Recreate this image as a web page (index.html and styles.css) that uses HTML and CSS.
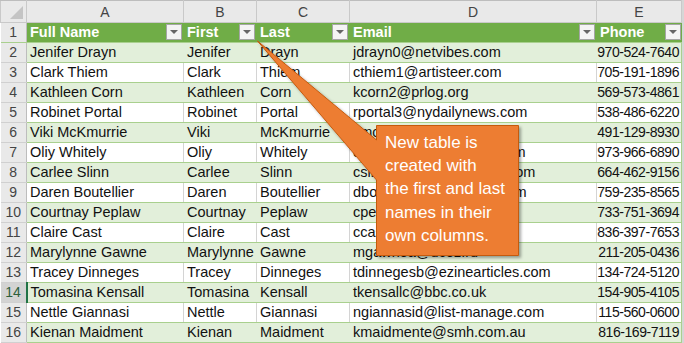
FILE: index.html
```html
<!DOCTYPE html>
<html lang="en">
  <head>
    <meta charset="UTF-8" />
    <title>Split Names Table</title>
    <link rel="stylesheet" href="styles.css">
  </head>
  <body>
    <div class="sheet">
      <table class="grid">
        <colgroup>
          <col class="c-row" />
          <col class="c-a" />
          <col class="c-b" />
          <col class="c-c" />
          <col class="c-d" />
          <col class="c-e" />
        </colgroup>
        <thead>
          <tr class="letters">
            <th class="corner"><span class="tri"></span></th>
            <th>A</th>
            <th>B</th>
            <th>C</th>
            <th>D</th>
            <th>E</th>
          </tr>
        </thead>
        <tbody>
          <tr class="head">
            <td class="num">1</td>
            <td><span class="hd">Full Name</span><span class="drop"></span></td>
            <td><span class="hd">First</span><span class="drop"></span></td>
            <td><span class="hd">Last</span><span class="drop"></span></td>
            <td><span class="hd">Email</span><span class="drop"></span></td>
            <td><span class="hd">Phone</span><span class="drop"></span></td>
          </tr>
          <tr class="band"><td class="num">2</td><td>Jenifer Drayn</td><td>Jenifer</td><td>Drayn</td><td>jdrayn0@netvibes.com</td><td class="ph">970-524-7640</td></tr>
          <tr><td class="num">3</td><td>Clark Thiem</td><td>Clark</td><td>Thiem</td><td>cthiem1@artisteer.com</td><td class="ph">705-191-1896</td></tr>
          <tr class="band"><td class="num">4</td><td>Kathleen Corn</td><td>Kathleen</td><td>Corn</td><td>kcorn2@prlog.org</td><td class="ph">569-573-4861</td></tr>
          <tr><td class="num">5</td><td>Robinet Portal</td><td>Robinet</td><td>Portal</td><td>rportal3@nydailynews.com</td><td class="ph">538-486-6220</td></tr>
          <tr class="band"><td class="num">6</td><td>Viki McKmurrie</td><td>Viki</td><td>McKmurrie</td><td>vmckmurrie4@moe.gov</td><td class="ph">491-129-8930</td></tr>
          <tr><td class="num">7</td><td>Oliy Whitely</td><td>Oliy</td><td>Whitely</td><td>owhitely5@tripadvisor.com</td><td class="ph">973-966-6890</td></tr>
          <tr class="band"><td class="num">8</td><td>Carlee Slinn</td><td>Carlee</td><td>Slinn</td><td>cslinn6@businessweek.com</td><td class="ph">664-462-9156</td></tr>
          <tr><td class="num">9</td><td>Daren Boutellier</td><td>Daren</td><td>Boutellier</td><td>dboutellier7@dropbox.com</td><td class="ph">759-235-8565</td></tr>
          <tr class="band"><td class="num">10</td><td>Courtnay Peplaw</td><td>Courtnay</td><td>Peplaw</td><td>cpeplaw8@ft.com</td><td class="ph">733-751-3694</td></tr>
          <tr><td class="num">11</td><td>Claire Cast</td><td>Claire</td><td>Cast</td><td>ccast9@who.int</td><td class="ph">836-397-7653</td></tr>
          <tr class="band"><td class="num">12</td><td>Marylynne Gawne</td><td>Marylynne</td><td>Gawne</td><td>mgawnea@ucoz.ru</td><td class="ph">211-205-0436</td></tr>
          <tr><td class="num">13</td><td>Tracey Dinneges</td><td>Tracey</td><td>Dinneges</td><td>tdinnegesb@ezinearticles.com</td><td class="ph">134-724-5120</td></tr>
          <tr class="band"><td class="num active">14</td><td>Tomasina Kensall</td><td>Tomasina</td><td>Kensall</td><td>tkensallc@bbc.co.uk</td><td class="ph">154-905-4105</td></tr>
          <tr><td class="num">15</td><td>Nettle Giannasi</td><td>Nettle</td><td>Giannasi</td><td>ngiannasid@list-manage.com</td><td class="ph">115-560-0600</td></tr>
          <tr class="band"><td class="num">16</td><td>Kienan Maidment</td><td>Kienan</td><td>Maidment</td><td>kmaidmente@smh.com.au</td><td class="ph">816-169-7119</td></tr>
        </tbody>
      </table>

      <svg class="callout-shape" width="684" height="343" viewBox="0 0 684 343">
        <defs>
          <filter id="shadow" x="-10%" y="-10%" width="130%" height="130%">
            <feDropShadow dx="2" dy="2" stdDeviation="1.5" flood-color="#000" flood-opacity="0.35" />
          </filter>
        </defs>
        <path d="M257.5 41 L376.5 140 L376.5 125.5 L518.5 125.5 L518.5 255.5 L376.5 255.5 L376.5 180 Z"
              fill="#ed7d31" stroke="#c55a11" stroke-width="1" filter="url(#shadow)" />
      </svg>
      <div class="callout-text">
        New table is<br />
        created with<br />
        the first and last<br />
        names in their<br />
        own columns.
      </div>
    </div>
  </body>
</html>
```

FILE: styles.css
```css
body {
  margin: 0;
  background: #d6d6d6;
  font-family: "Liberation Sans", Arial, sans-serif;
}
.sheet {
  position: relative;
  width: 684px;
  height: 343px;
  overflow: hidden;
  background: #d6d6d6;
}
.grid {
  border-collapse: collapse;
  table-layout: fixed;
  width: 681px;
  background: #fff;
}
.c-row { width: 26px; }
.c-a { width: 157px; }
.c-b { width: 73px; }
.c-c { width: 93px; }
.c-d { width: 247px; }
.c-e { width: 85px; }

.letters th {
  height: 21px;
  padding: 0;
  background: #e9e9e9;
  border: 1px solid #c9c9c9;
  border-top-color: #bdbdbd;
  color: #444;
  font-weight: normal;
  font-size: 14px;
  text-align: center;
  vertical-align: middle;
}
.corner {
  position: relative;
}
.tri {
  position: absolute;
  right: 3px;
  bottom: 3px;
  width: 0;
  height: 0;
  border-left: 13px solid transparent;
  border-bottom: 13px solid #c4c4c4;
}

td {
  height: 19px;
  padding: 0 3px;
  font-size: 14.5px;
  line-height: 19px;
  color: #111;
  white-space: nowrap;
  overflow: hidden;
  vertical-align: bottom;
  border-left: 1px solid #d4d4d4;
  border-bottom: 1px solid #a9d08e;
}
td.num {
  padding: 0;
  text-align: center;
  background: #e9e9e9;
  color: #444;
  font-size: 14px;
  border-left: none;
  border-right: 1px solid #bdbdbd;
  border-bottom: 1px solid #d0d0d0;
}
td.num.active {
  background: #d3d3d3;
  color: #2d5f3c;
  border-right: 2px solid #217346;
}
td.ph {
  text-align: right;
  padding: 0 2px 0 0;
  font-size: 14px;
  letter-spacing: -0.45px;
  border-right: 1px solid #a9d08e;
}
.band td {
  background: #e2efda;
  border-left-color: #e2efda;
}
.band td.num {
  background: #e9e9e9;
}
.band td.num.active {
  background: #d3d3d3;
}

.head td {
  background: #70ad47;
  border-left-color: #70ad47;
  border-bottom: 1px solid #a9d08e;
  color: #fff;
  font-weight: bold;
  font-size: 14.5px;
  letter-spacing: 0;
  text-align: left;
  padding-left: 3px;
  position: relative;
}
.head td.num {
  background: #e9e9e9;
  color: #444;
  font-weight: normal;
  font-size: 14px;
  text-align: center;
  padding: 0;
}
.drop {
  position: absolute;
  right: 1px;
  top: 1px;
  width: 14px;
  height: 14px;
  background: #f4f4f4;
  border: 1px solid #a6a6a6;
}
.drop::after {
  content: "";
  position: absolute;
  left: 3px;
  top: 5px;
  border-left: 4px solid transparent;
  border-right: 4px solid transparent;
  border-top: 4px solid #666;
}

.callout-shape {
  position: absolute;
  left: 0;
  top: 0;
  pointer-events: none;
}
.callout-text {
  position: absolute;
  left: 377px;
  top: 126px;
  width: 134px;
  padding: 5px 0 0 8px;
  color: #fff;
  font-size: 17px;
  line-height: 23.2px;
}
```
